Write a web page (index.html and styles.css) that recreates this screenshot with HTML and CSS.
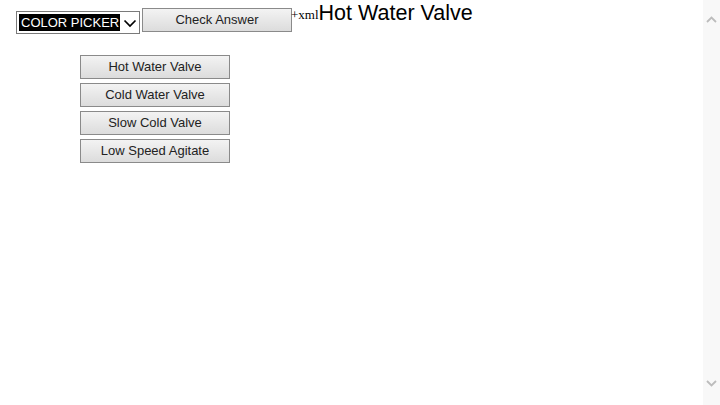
FILE: index.html
```html
<!DOCTYPE html>
<html>
<head>
<meta charset="utf-8">
<link rel="stylesheet" href="styles.css">
</head>
<body>
<div class="page">
  <div class="main">
    <div class="toolbar">
      <div class="picker">
        <span class="picker-label">COLOR PICKER</span>
        <svg class="chev" width="14" height="10" viewBox="0 0 14 10"><path d="M1.5 2.5 L7 8 L12.5 2.5" fill="none" stroke="#000" stroke-width="1.7"/></svg>
      </div>
      <div class="btn check">Check Answer</div>
      <span class="xml">+xml</span>
      <span class="title">Hot Water Valve</span>
    </div>
    <div class="options">
      <div class="btn opt">Hot Water Valve</div>
      <div class="btn opt">Cold Water Valve</div>
      <div class="btn opt">Slow Cold Valve</div>
      <div class="btn opt">Low Speed Agitate</div>
    </div>
  </div>
  <div class="scrollbar">
    <svg width="17" height="12" viewBox="0 0 17 12"><path d="M4 8 L8.5 3.5 L13 8" fill="none" stroke="#bcbcbc" stroke-width="1.8"/></svg>
    <svg width="17" height="12" viewBox="0 0 17 12"><path d="M4 4 L8.5 8.5 L13 4" fill="none" stroke="#bcbcbc" stroke-width="1.8"/></svg>
  </div>
</div>
</body>
</html>
```
FILE: styles.css
```css
html, body {
  margin: 0;
  padding: 0;
  background: #fff;
}
.page {
  display: flex;
  width: 720px;
  height: 405px;
  overflow: hidden;
}
.main {
  flex: 1;
  font-family: "Liberation Sans", Arial, sans-serif;
}
.toolbar {
  display: flex;
  align-items: flex-start;
  padding-left: 16px;
}
.picker {
  box-sizing: border-box;
  margin-top: 11px;
  width: 124px;
  height: 23px;
  border: 1px solid #7a7a7a;
  display: flex;
  align-items: center;
  padding-left: 2px;
}
.picker-label {
  background: #000;
  color: #fff;
  font-size: 13px;
  line-height: 17px;
  padding: 0 1px 0 2px;
  white-space: nowrap;
}
.chev {
  margin-left: 3px;
}
.btn {
  box-sizing: border-box;
  width: 150px;
  height: 24px;
  border: 1px solid #8a8a8a;
  background: linear-gradient(#f3f3f3, #dcdcdc);
  color: #222;
  font-size: 13px;
  line-height: 22px;
  text-align: center;
}
.check {
  margin-top: 8px;
  margin-left: 2px;
}
.xml {
  font-family: "Liberation Serif", "Times New Roman", serif;
  font-size: 13px;
  margin-top: 7px;
  margin-left: -1px;
  color: #000;
}
.title {
  font-size: 21.5px;
  line-height: 24px;
  margin-top: 1px;
  color: #000;
}
.options {
  display: flex;
  flex-direction: column;
  gap: 4px;
  margin-top: 21px;
  padding-left: 80px;
}
.scrollbar {
  width: 17px;
  background: #f8f8f8;
  display: flex;
  flex-direction: column;
  justify-content: space-between;
  padding: 14px 0 16px;
  box-sizing: border-box;
}
```
